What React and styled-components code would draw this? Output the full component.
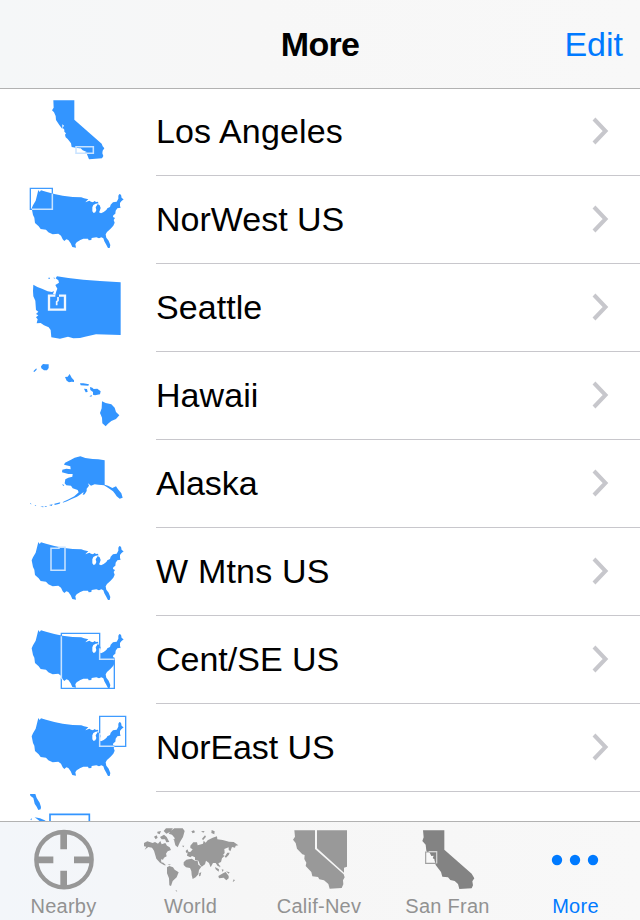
import React from "react";
import styled, { createGlobalStyle } from "styled-components";

const Land = styled.path`
  fill: #3395ff;
`;

const Water = styled.path`
  fill: #fff;
`;

const Outline = styled.path`
  fill: none;
  stroke: #3f9bff;
  stroke-width: 4;
`;

const Halo = styled.path`
  fill: none;
  stroke: #c9e3ff;
  stroke-width: 4.6;
`;

const Notch = styled.path`
  fill: none;
  stroke: #f0f7ff;
  stroke-width: ${(props) => (props.$thin ? 5 : 7)};
`;

const Frame = styled.path`
  fill: none;
  stroke: #3395ff;
  stroke-width: 5;
`;

const US =
  "M53 44L55 36L59 42L63 37L78 41L103 48L128 53L158 57L184 58L192 61L205 64L200 68L196 73L208 68L213 71L219 73L224 69L228 72L233 71L236 76L227 77L220 81L217 88L217 100L221 105L226 103L229 96L227 88L231 82L233 78L239 82L242 90L239 99L237 103L243 106L251 102L259 96L262 91L270 87L272 80L279 73L290 71L295 62L295 53L298 48L303 50L305 60L311 64L304 70L300 75L300 84L302 89L292 91L287 98L286 107L280 112L279 117L285 120L281 126L284 134L280 143L271 153L261 162L257 169L259 179L266 188L271 201L269 210L264 210L258 199L253 190L250 181L244 178L237 181L229 178L215 180L214 186L206 187L204 182L190 182L181 186L170 193L166 199L168 209L157 207L152 196L145 186L139 184L133 189L128 184L123 173L115 167L98 169L85 163L78 155L62 153L56 145L45 135L43 119L39 111L35 91L39 82L47 68L50 56Z";

const CA =
  "M100 31H163V89L245 161L248 169L253 175L248 182L247 190L250 198L246 205L207 208L203 198L200 190L192 185L184 183L175 175L155 171L153 160L143 147L137 142L135 134L138 130L133 125L133 119L128 113L132 107L127 103L127 117L118 105L108 90L107 78L102 67L96 61L101 53Z";

const HAWAII =
  "M40 52L49 43L50 47L43 54ZM63 37L69 30L77 31L86 31L86 42L81 49L72 49L64 43ZM135 69L143 68L149 60L155 71L162 79L162 84L155 83L147 85L140 80ZM180 88L190 88L207 91L205 95L182 94ZM192 104L201 105L203 114L197 115ZM210 99L217 101L221 105L232 104L242 112L240 121L225 124L219 122L219 114L211 108ZM208 127L216 123L214 128ZM246 142L257 147L274 151L284 161L288 174L298 184L288 195L274 201L264 209L257 217L247 208L246 191L240 177L245 163Z";

const ALASKA =
  "M135 62L153 53L164 47L181 43L196 48L218 51L235 52L254 55V128L264 131L277 138L288 133L294 142L304 154L308 167L299 170L290 163L285 155L279 148L265 138L252 130L235 128L224 127L213 131L204 124L207 131L200 140L200 147L194 157L188 159L191 150L182 157L171 164L155 171L141 178L128 182L130 179L146 172L163 163L176 151L173 144L158 139L153 131L139 130L134 124L136 112L145 107L157 104L158 96L145 96L126 91L127 83L139 80L152 82L151 73L132 68ZM126 127L133 129L130 132ZM103 185L121 181L119 185L104 189ZM87 189L98 187L95 192ZM61 194L70 193L70 196ZM73 192L81 192L78 195ZM44 189L49 190L46 192ZM30 182L35 187L31 186Z";

const WASHINGTON =
  "M40 56L52 63L66 68L83 76L96 78L102 75L99 84L106 86L109 76L112 68L106 57L117 50L115 43L107 37L111 31L145 36L190 41L240 45L302 49V207L228 205L195 212L180 216L160 217L144 212L120 218L94 214L92 192L86 184L72 178L62 171L50 172L53 160L48 154L55 148L48 144L55 137L48 132L46 104L40 91L39 75Z";

const SHAPES = {
  la: (
    <>
      <Land d={CA} />
      <Water d="M170 175H182L188 181L202 187H170Z" />
      <Halo d="M168 170H220V190H168Z" />
    </>
  ),
  norwest: (
    <>
      <Land d={US} />
      <Outline d="M97 47V31H31V94H36" />
      <Halo d="M97 47V94H36" />
    </>
  ),
  seattle: (
    <>
      <Land d={WASHINGTON} />
      <Land d="M85 35H90V38H85ZM100 35H104V39Z" />
      <Notch d="M106 89H87V131H135V89H117" />
      <Notch $thin d="M114 93V104L110 107V118" />
    </>
  ),
  hawaii: <Land d={HAWAII} />,
  alaska: <Land d={ALASKA} />,
  mtns: (
    <>
      <Land d={US} />
      <Halo d="M93 55H117V52H135V121H93Z" />
    </>
  ),
  central: (
    <>
      <Land d={US} />
      <Outline d="M124 55V46H239V90M283 124V211H124V180" />
      <Halo d="M124 55V184M239 91V124H283" />
    </>
  ),
  noreast: (
    <>
      <Land d={US} />
      <Outline d="M239 82V31H317V121H283" />
      <Halo d="M239 82V121H283" />
    </>
  ),
  florida: (
    <>
      <Land d="M30 0H46L50 12L59 26L63 39L62 46L55 48L50 38L44 29L40 12L31 5ZM44 70L60 73L74 79L83 85H64L52 76ZM31 76L36 73L34 79Z" />
      <Frame d="M90 90V61H208V90" />
    </>
  ),
};

const places = [
  { name: "Los Angeles", shape: "la", spacing: 0.15 },
  { name: "NorWest US", shape: "norwest", spacing: 0 },
  { name: "Seattle", shape: "seattle", spacing: 0.05 },
  { name: "Hawaii", shape: "hawaii", spacing: 0.05 },
  { name: "Alaska", shape: "alaska", spacing: -0.1 },
  { name: "W Mtns US", shape: "mtns", spacing: 0.2 },
  { name: "Cent/SE US", shape: "central", spacing: 0 },
  { name: "NorEast US", shape: "noreast", spacing: -0.1 },
  { name: "", shape: "florida", spacing: 0 },
];

const tabs = [
  {
    name: "Nearby",
    box: "-60 21 384 210",
    shift: -1,
    icon: (
      <g fill="none" stroke="#979797">
        <circle cx="132" cy="134" r="83" strokeWidth="13" />
        <path
          d="M131 50V103M131 167V219M48 134.500H100M162 134.500H216"
          strokeWidth="20"
        />
      </g>
    ),
  },
  {
    name: "World",
    box: "324 21 384 210",
    shift: -3,
    icon: (
      <path
        fill="#999"
        d="M372 84L382 79L398 84L405 81L414 86L421 78L425 88L436 84L441 92L449 97L453 105L443 109L438 116L440 124L432 128L429 134L423 133L424 142L430 143L438 151L433 151L420 143L409 131L406 121L402 107L396 98L385 96L374 104L379 95L372 94ZM402 65L410 61L413 68L407 73ZM412 50L423 48L419 58L412 55ZM420 66L432 59L440 66L448 81L439 82L435 73L425 73ZM431 48L438 40H459L450 51L439 56ZM446 56L453 47L463 40H488L494 48L489 66L480 81L473 97L466 91L463 79L464 69L456 59ZM441 157L448 153L459 157L464 164L476 172L470 187L458 198L453 213L448 211L447 190L441 175ZM491 142L499 134L515 131L525 137L533 138L535 149L544 155L537 165L535 178L527 187L518 192L515 180L514 168L510 159L498 157L491 150ZM538 174L544 172L541 183L537 184ZM501 122L503 112L512 110L518 103L511 99L511 92L520 82L531 82L533 91L549 86L551 77L557 83L563 76L578 68L591 64L592 73L608 75L627 80L641 81L655 91L647 92L645 98L636 96L631 109L626 104L626 97L613 102L614 114L609 120L614 122L606 130L603 141L595 145L600 155L593 153L587 144L579 144L572 157L567 144L558 137L555 148L545 155L540 149L535 137L525 135L525 127L516 123L511 127ZM497 108L502 103L506 111L499 114ZM486 92L493 92L490 97ZM595 183L609 175L617 171L626 183L626 190L619 196L611 188L597 190ZM585 156L597 163L596 170L587 163ZM605 163L611 164L608 171ZM514 49L522 46L525 52L518 55ZM543 49L554 48L550 53ZM546 71L555 61L558 65L549 76ZM575 45L584 49L583 58L574 54ZM622 113L629 113L626 120L618 128L614 125ZM641 193L645 196L638 202ZM443 147L453 149L448 151ZM460 73L464 72L463 77ZM468 224L472 230L467 228ZM597 150L601 153L600 158ZM618 169L629 172L626 176Z"
      />
    ),
  },
  {
    name: "Calif-Nev",
    box: "-12 21 384 210",
    shift: -2,
    icon: (
      <g fill="#999">
        <path d="M103 46H165V102L251 178L254 187L249 196L250 208L245 219L209 221L205 207L192 196L178 193L174 186L157 184L154 171L137 153L139 143L133 132L134 120L127 118L111 101L107 84L99 74L105 65Z" />
        <path d="M171 46H261V155L252 158V173L171 100Z" />
      </g>
    ),
  },
  {
    name: "San Fran",
    box: "372 21 384 210",
    shift: -1,
    icon: (
      <g>
        <path
          d="M489 46H553V104L635 176L643 190L637 199L639 211L635 220L598 222L594 207L584 198L571 195L564 187L547 185L543 171L527 150L524 139L523 132L514 128L507 118L499 107L497 89L487 78L491 67Z"
          fill="#838383"
        />
        <path d="M498 111H508L514 123L521 122L518 130L526 144H498Z" fill="#f8f8f8" />
        <path d="M530 111V145H497V111Z" fill="none" stroke="#a0a0a0" strokeWidth="3.500" />
        <path d="M506 110H530V145" fill="none" stroke="#d5d5d5" strokeWidth="3.500" />
      </g>
    ),
  },
  {
    name: "More",
    box: "36 276 384 210",
    active: true,
    shift: -1,
    icon: (
      <g fill="#007aff">
        <circle cx="171" cy="390" r="15.500" />
        <circle cx="225" cy="390" r="15.500" />
        <circle cx="279" cy="390" r="15.500" />
      </g>
    ),
  },
];

export default function App() {
  return (
    <>
      <GlobalStyle />
      <Screen>
        <Header>
          <Title>More</Title>
          <EditButton>Edit</EditButton>
        </Header>
        <List>
          {places.map((place) => (
            <ListItem key={place.shape} {...place} />
          ))}
        </List>
        <TabBar>
          {tabs.map((tab) => (
            <Tab key={tab.name} $active={tab.active}>
              <TabIcon viewBox={tab.box}>{tab.icon}</TabIcon>
              <TabLabel $shift={tab.shift}>{tab.name}</TabLabel>
            </Tab>
          ))}
        </TabBar>
      </Screen>
    </>
  );
}

const ListItem = (props) => {
  return (
    <Item>
      <Thumb viewBox="0 0 360 255">{SHAPES[props.shape]}</Thumb>
      <ItemBody>
        <ItemName $spacing={props.spacing}>{props.name}</ItemName>
        {props.name && (
          <Chevron viewBox="0 0 18 28">
            <path d="M3 2L14.500 14L3 26" />
          </Chevron>
        )}
      </ItemBody>
    </Item>
  );
};

const GlobalStyle = createGlobalStyle`
  * {
    box-sizing: border-box;
  }
  body {
    margin: 0;
    background: #fff;
    font-family: "Liberation Sans", Arial, sans-serif;
  }
`;

const Screen = styled.div`
  display: flex;
  flex-direction: column;
  width: 640px;
  height: 920px;
  overflow: hidden;
`;

const Header = styled.header`
  display: grid;
  grid-template-columns: 1fr auto 1fr;
  align-items: center;
  flex: none;
  height: 89px;
  padding: 0 17px;
  border-bottom: 1px solid #b2b2b2;
  background: linear-gradient(90deg, #f5f7f8, #f7f7f7 40%, #f8f8f8);
`;

const Title = styled.h1`
  grid-column: 2;
  margin: 0;
  font-size: 34px;
  font-weight: 700;
  letter-spacing: -0.7px;
`;

const EditButton = styled.button`
  justify-self: end;
  padding: 0;
  border: 0;
  background: none;
  color: #007aff;
  font-family: inherit;
  font-size: 34px;
`;

const List = styled.ul`
  flex: 1;
  min-height: 0;
  margin: -1px 0 0;
  padding: 0;
  overflow: hidden;
  list-style: none;
`;

const Item = styled.li`
  display: flex;
  height: 88px;
  padding-left: 20px;
`;

const Thumb = styled.svg`
  flex: none;
  width: 120px;
  height: 85px;
  margin: 2px 16px 0 0;
`;

const ItemBody = styled.div`
  display: flex;
  flex: 1;
  align-items: center;
  justify-content: space-between;
  padding-right: 31px;
  border-bottom: 1px solid #c8c7cc;
`;

const ItemName = styled.span`
  color: #000;
  font-size: 34px;
  letter-spacing: ${(props) => props.$spacing}px;
`;

const Chevron = styled.svg`
  width: 18px;
  height: 28px;
  margin-bottom: 1px;
  fill: none;
  stroke: #c7c7cc;
  stroke-width: 4;
`;

const TabBar = styled.nav`
  display: flex;
  flex: none;
  height: 99px;
  border-top: 1px solid #b2b2b2;
  background: linear-gradient(90deg, #f3f6fa, #f4f6f9 18%, #f6f6f6 38%, #f8f8f8);
`;

const Tab = styled.div`
  display: flex;
  flex: 1;
  flex-direction: column;
  align-items: center;
  color: ${(props) => (props.$active ? "#007aff" : "#929292")};
`;

const TabIcon = styled.svg`
  flex: none;
  width: 128px;
  height: 70px;
`;

const TabLabel = styled.span`
  margin-top: 2px;
  margin-left: ${(props) => props.$shift}px;
  font-size: 20px;
  line-height: 24px;
  letter-spacing: 0.25px;
`;
